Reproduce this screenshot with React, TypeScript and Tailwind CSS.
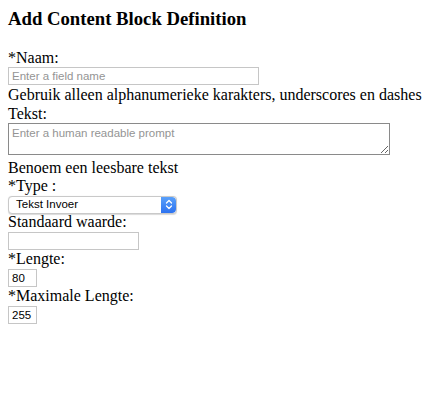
import React from 'react';

const serif = { fontFamily: '"Liberation Serif", "Times New Roman", serif' };

function Field({ children, h }: { children: React.ReactNode; h: string }) {
  return <div className={h}>{children}</div>;
}

export default function App() {
  const inputCls =
    "block h-[18px] border border-[#c6c6c6] bg-white px-[3px] text-[11.5px] leading-[16px] text-black placeholder:text-[#949494] outline-none font-['Liberation_Sans',Arial,sans-serif]";

  return (
    <div className="min-h-[402px] w-[438px] bg-white p-2 text-black" style={serif}>
      <h3 className="mb-[19px] text-[18.72px] font-bold leading-[21.5px]">Add Content Block Definition</h3>

      <div className="text-[16px] leading-[18.5px]">*Naam:</div>
      <Field h="h-[19px]">
        <input className={`${inputCls} w-[251px]`} placeholder="Enter a field name" />
      </Field>
      <div className="text-[16px] leading-[18.5px]">Gebruik alleen alphanumerieke karakters, underscores en dashes</div>
      <div className="text-[16px] leading-[18.5px]">Tekst:</div>
      <Field h="h-[35.5px]">
        <textarea
          className="block h-[32px] w-[382px] border border-[#8a8a8a] bg-white px-[3px] py-[2px] text-[11.5px] leading-[14px] placeholder:text-[#949494] outline-none font-['Liberation_Sans',Arial,sans-serif]"
          placeholder="Enter a human readable prompt"
        />
      </Field>
      <div className="text-[16px] leading-[18.5px]">Benoem een leesbare tekst</div>
      <div className="text-[16px] leading-[18.5px]">*Type :</div>
      <Field h="h-[17.5px]">
        <div className="flex h-[18px] w-[169px] overflow-hidden rounded-[4px] border border-[#c9c9c9] bg-white shadow-[0_0.5px_1px_rgba(0,0,0,0.15)] font-['Liberation_Sans',Arial,sans-serif]">
          <div className="flex flex-1 items-center pl-[7px] text-[11.5px] leading-none text-black">Tekst Invoer</div>
          <div className="flex w-[15px] items-center justify-center rounded-r-[4px] bg-gradient-to-b from-[#5aa0fa] to-[#2d72f0]">
            <svg width="8" height="11" viewBox="0 0 8 11" fill="none">
              <path d="M1.5 4L4 1.5L6.5 4" stroke="white" strokeWidth="1.3" strokeLinecap="round" strokeLinejoin="round" />
              <path d="M1.5 7L4 9.5L6.5 7" stroke="white" strokeWidth="1.3" strokeLinecap="round" strokeLinejoin="round" />
            </svg>
          </div>
        </div>
      </Field>
      <div className="text-[16px] leading-[18.5px]">Standaard waarde:</div>
      <Field h="h-[18.5px]">
        <input className={`${inputCls} w-[131px]`} />
      </Field>
      <div className="text-[16px] leading-[18.5px]">*Lengte:</div>
      <Field h="h-[18.5px]">
        <input className={`${inputCls} w-[29px]`} defaultValue="80" />
      </Field>
      <div className="text-[16px] leading-[18.5px]">*Maximale Lengte:</div>
      <Field h="h-[18.5px]">
        <input className={`${inputCls} w-[29px]`} defaultValue="255" />
      </Field>
    </div>
  );
}
